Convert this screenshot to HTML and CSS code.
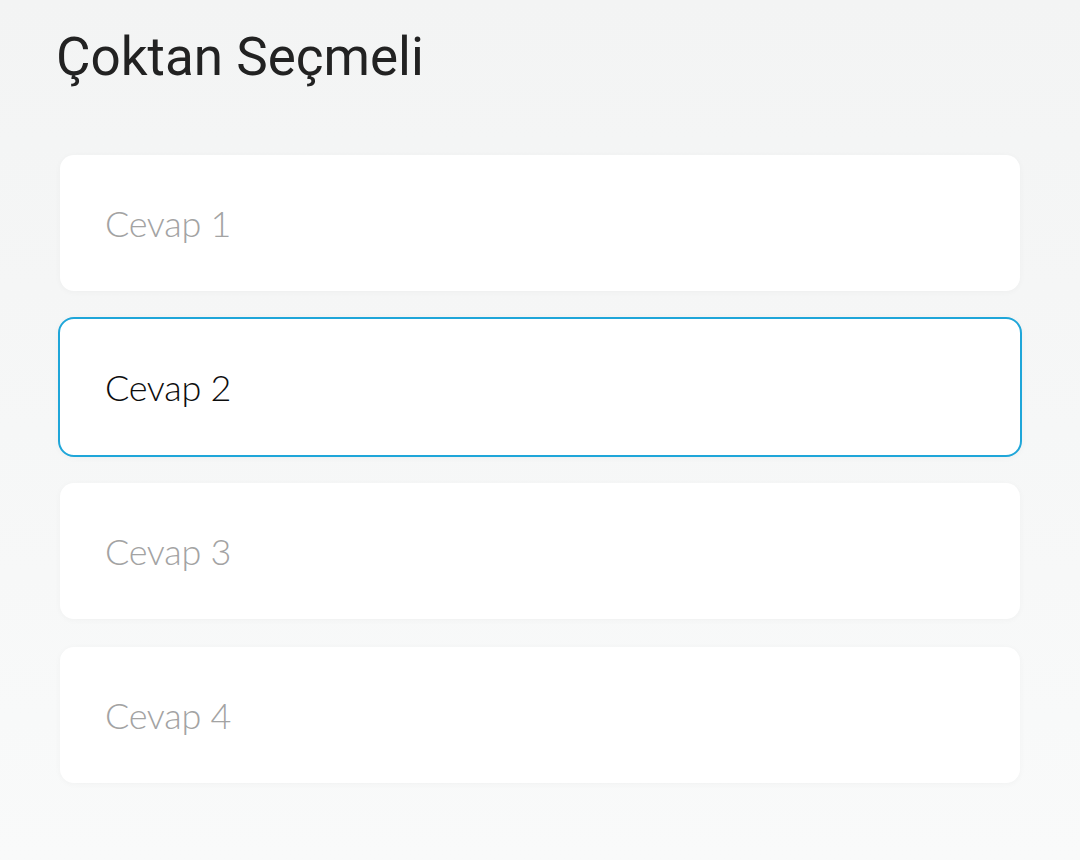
FILE: index.html
```html
<!DOCTYPE html>
<html lang="tr">
<head>
<meta charset="utf-8">
<title>Çoktan Seçmeli</title>
<link rel="stylesheet" href="styles.css">
</head>
<body>
<main class="page">
  <h1 class="title">Çoktan Seçmeli</h1>
  <div class="options">
    <div class="option">Cevap 1</div>
    <div class="option selected">Cevap 2</div>
    <div class="option">Cevap 3</div>
    <div class="option">Cevap 4</div>
  </div>
</main>
</body>
</html>
```
FILE: styles.css
```css
html, body {
  margin: 0;
  padding: 0;
}
body {
  width: 1080px;
  height: 860px;
  overflow: hidden;
  background: linear-gradient(180deg, #f3f4f4 0%, #f9fafa 100%);
}
.page {
  padding: 26px 60px 0 60px;
}
.title {
  margin: 0 0 0 -4px;
  font-family: Roboto, "Liberation Sans", sans-serif;
  font-weight: 400;
  font-size: 53px;
  line-height: 62px;
  color: #222222;
}
.options {
  margin-top: 67px;
  display: flex;
  flex-direction: column;
  gap: 28px;
}
.option {
  box-sizing: border-box;
  height: 136px;
  display: flex;
  align-items: center;
  padding-left: 45px;
  background: #ffffff;
  border-radius: 14px;
  box-shadow: 0 1px 6px rgba(0, 0, 0, 0.035);
  font-family: Lato, "Noto Sans", sans-serif;
  font-weight: 300;
  font-size: 36px;
  letter-spacing: -0.3px;
  color: #a3a3a3;
}
.option.selected {
  margin: -2px;
  height: 140px;
  padding-left: 45px;
  border: 2px solid #1fa6d9;
  border-radius: 16px;
  color: #0d0d0d;
}
```
